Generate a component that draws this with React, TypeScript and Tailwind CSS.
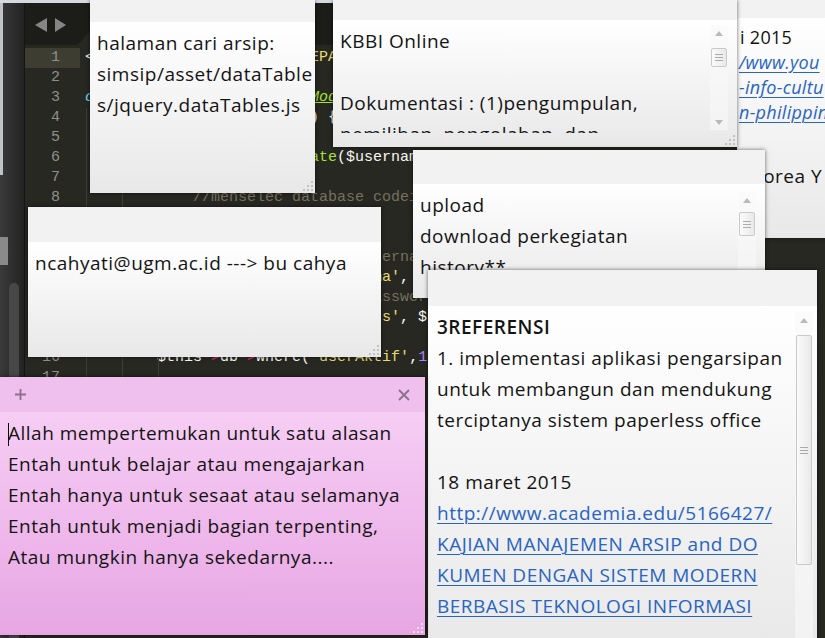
import React from 'react';

const W = 'text-[#f8f8f2]';
const C = 'text-[#75715e]';
const Y = 'text-[#e6db74]';
const P = 'text-[#f92672]';
const B = 'text-[#66d9ef] italic';
const G = 'text-[#a6e22e]';
const GI = 'text-[#a6e22e] italic underline';
const V = 'text-[#ae81ff]';

type Tok = [string, string];

const code: Tok[][] = [
  [['<?php ', W], ['if', P], [' ( ', W], ['!', P], [' ', W], ['defined', B], ['(', W], ["'BASEPATH'", Y], [')) ', W], ['exit', P], ['(', W], ["'No direct script access allowed'", Y], [');', W]],
  [],
  [['class', B], [' ', W], ['Login_m', G], [' ', W], ['extends', B], [' ', W], ['CI_Model', GI], [' {', W]],
  [['    ', W], ['function', B], [' ', W], ['__construct', G], ['() { parent::__construct(); }', W]],
  [],
  [['    ', W], ['public', B], [' ', W], ['function', B], [' ', W], ['validate', G], ['($username, $password)', W]],
  [['    {', W]],
  [['            //menselec database codeigniter', C]],
  [],
  [['            //where', C]],
  [["           //$this->db->where('username', $username);", C]],
  [['            $this', W], ['->', P], ['db', W], ['->', P], ['where(', W], ["'nama'", Y], [', $username);', W]],
  [["           //$this->db->where('password', $password);", C]],
  [['            $this', W], ['->', P], ['db', W], ['->', P], ['where(', W], ["'pass'", Y], [', $password);', W]],
  [],
  [['        $this', W], ['->', P], ['db', W], ['->', P], ['where(', W], ["'userAktif'", Y], [',', W], ['1', V], [');', W]],
  [],
  [['        $query ', W], ['=', P], [' $this', W], ['->', P], ['db', W], ['->', P], ['get(', W], ["'user'", Y], [');', W]],
  [['        ', W], ['if', P], [' ($query', W], ['->', P], ['num_rows() ', W], ['==', P], [' ', W], ['1', V], [')', W]],
  [['        {', W]],
  [['            ', W], ['return', P], [' $query', W], ['->', P], ['row();', W]],
  [['        }', W]],
  [['        ', W], ['return', P], [' ', W], ['false', V], [';', W]],
  [['    }', W]],
  [],
  [['}', W]],
  [],
];

function Grip({ pink }: { pink?: boolean }) {
  const dots = [
    [8, 0],
    [4, 4],
    [8, 4],
    [0, 8],
    [4, 8],
    [8, 8],
  ];
  return (
    <svg className="absolute right-[2px] bottom-[2px]" width="11" height="11" viewBox="0 0 11 11">
      {dots.map(([x, y], i) => (
        <rect key={i} x={x + 1} y={y + 1} width="2" height="2" fill={pink ? '#f7dcf5' : '#c2c2c2'} />
      ))}
    </svg>
  );
}

function ScrollBar({ className, thumb, down }: { className: string; thumb: string; down?: string }) {
  return (
    <div className={`absolute w-[18px] bg-[#f9f9f9]/60 ${className}`}>
      <svg className="absolute left-[5px] top-[6px]" width="8" height="5" viewBox="0 0 8 5">
        <polygon points="0,5 4,0 8,5" fill="#b9b9b9" />
      </svg>
      <div
        className={`absolute left-[1px] right-[1px] flex items-center justify-center rounded-[2px] border border-[#cacaca] bg-linear-to-r from-[#fafafa] to-[#e9e9e9] ${thumb}`}
      >
        <div className="flex flex-col gap-[2px]">
          <div className="h-px w-[8px] bg-[#ababab]" />
          <div className="h-px w-[8px] bg-[#ababab]" />
          <div className="h-px w-[8px] bg-[#ababab]" />
        </div>
      </div>
      {down && (
        <svg className={`absolute left-[5px] ${down}`} width="8" height="5" viewBox="0 0 8 5">
          <polygon points="0,0 8,0 4,5" fill="#b9b9b9" />
        </svg>
      )}
    </div>
  );
}

type NoteProps = {
  className: string;
  head: string;
  pink?: boolean;
  grip?: boolean;
  headContent?: React.ReactNode;
  extra?: React.ReactNode;
  children?: React.ReactNode;
};

function Note({ className, head, pink, grip = true, headContent, extra, children }: NoteProps) {
  return (
    <div className={`absolute flex flex-col shadow-[0_0_4px_rgba(0,0,0,0.6)] ${className}`}>
      <div className={`${head} flex shrink-0 items-center justify-between ${pink ? 'bg-[#efc0ee]' : 'bg-[#f2f2f2]'}`}>
        {headContent}
      </div>
      <div
        className={`relative min-h-0 flex-1 overflow-hidden bg-linear-to-b ${
          pink ? 'from-[#f6cdf4] to-[#e7a6e3]' : 'from-white to-[#e8e8e8]'
        }`}
      >
        {children}
        {extra}
        {grip && <Grip pink={pink} />}
      </div>
    </div>
  );
}

const hand =
  "font-['Open_Sans','Noto_Sans',sans-serif] text-[19px] tracking-[0.5px] leading-[31px] text-[#141414] whitespace-nowrap";
const link = 'text-[#2864c2] underline decoration-1 underline-offset-[3px]';

export default function App() {
  return (
    <div className="relative h-[638px] w-[825px] overflow-hidden bg-[#272822] font-['Liberation_Mono','DejaVu_Sans_Mono',monospace]">
      <div className="h-[3px] bg-[#d6dadf]" />
      <div className="flex h-[635px]">
        {/* sidebar */}
        <div className="flex w-[25px] shrink-0 border-r border-[#151515] bg-linear-to-r from-[#3a3a3a] to-[#232323]">
          <div className="flex w-[9px] flex-col">
            <div className="h-[172px] w-[3px] bg-[#bfc3c8]" />
            <div className="mt-[62px] h-[28px] w-[8px] bg-[#8a8a8a]" />
          </div>
          <div className="flex w-[10px] flex-col">
            <div className="mt-[280px] flex-1 rounded-t-full bg-[#474747]" />
          </div>
        </div>

        <div className="flex min-w-0 flex-1 flex-col">
          {/* tab bar */}
          <div className="relative flex h-[42px] shrink-0 items-center gap-[8px] bg-[#1c1c19] pl-[10px] pt-[2px]">
            <svg width="12" height="14" viewBox="0 0 12 14">
              <polygon points="12,0 0,7 12,14" fill="#858585" />
            </svg>
            <svg width="11" height="14" viewBox="0 0 11 14">
              <polygon points="0,0 11,7 0,14" fill="#858585" />
            </svg>
            <svg className="absolute bottom-0 left-[50px]" width="40" height="14" viewBox="0 0 40 14">
              <path d="M0 14 C 7 14, 9 2, 16 1 L 40 1 L 40 14 Z" fill="#272822" />
            </svg>
          </div>

          {/* editor */}
          <div className="relative pt-[3px] text-[15px] leading-[20px]">
            {code.map((toks, i) => (
              <div key={i} className="flex h-[20px] whitespace-pre">
                <div className={`w-[55px] shrink-0 pr-[20px] text-right text-[#8f908a] ${i === 0 ? 'bg-[#3e3d32]' : ''}`}>
                  {i + 1}
                </div>
                <div className="pl-[5px]">
                  {toks.map(([t, c], j) => (
                    <span key={j} className={c}>
                      {t}
                    </span>
                  ))}
                </div>
              </div>
            ))}
            <div className="pointer-events-none absolute left-[61px] top-[63px] bottom-0 w-px bg-[#3e3f38]" />
            <div className="pointer-events-none absolute left-[97px] top-[123px] bottom-0 w-px bg-[#3e3f38]" />
            <div className="pointer-events-none absolute left-[133px] top-[163px] bottom-0 w-px bg-[#3e3f38]" />
          </div>
        </div>
      </div>

      {/* note behind, top right */}
      <Note className="left-[737px] top-0 h-[238px] w-[100px]" head="h-[18px]" grip={false}>
        <div className="pl-[2px] pt-[7px] font-['Open_Sans',sans-serif] text-[18px] tracking-[0.3px] leading-[25px] whitespace-nowrap text-[#111]">
          <div className="pl-[1px]">i 2015</div>
          <div className={`italic ${link}`}>/www.you</div>
          <div className={`italic ${link}`}>-info-cultu</div>
          <div className={`italic ${link}`}>n-philippin</div>
        </div>
        <div className={`${hand} mt-[36px] pl-[14px]`}>Korea Y</div>
      </Note>

      {/* KBBI */}
      <Note
        className="left-[333px] top-0 h-[147px] w-[404px]"
        head="h-[20px]"
        extra={<ScrollBar className="left-[377px] top-[5px] h-[105px]" thumb="top-[23px] h-[19px]" down="top-[95px]" />}
      >
        <div className="h-[113px] overflow-hidden">
          <div className={`${hand} pl-[7px] pt-[6px]`}>
            <div>KBBI Online</div>
            <div>&nbsp;</div>
            <div>Dokumentasi : (1)pengumpulan,</div>
            <div>pemilihan, pengolahan, dan</div>
          </div>
        </div>
      </Note>

      {/* halaman cari arsip */}
      <Note className="left-[90px] top-0 h-[193px] w-[225px]" head="h-[22px]">
        <div className={`${hand} pl-[7px] pt-[6px]`}>
          <div>halaman cari arsip:</div>
          <div>simsip/asset/dataTable</div>
          <div>s/jquery.dataTables.js</div>
        </div>
      </Note>

      {/* upload */}
      <Note
        className="left-[413px] top-[150px] h-[148px] w-[352px]"
        head="h-[34px]"
        grip={false}
        extra={<ScrollBar className="left-[325px] top-[8px] h-[200px]" thumb="top-[20px] h-[24px]" />}
      >
        <div className={`${hand} pl-[7px] pt-[6px]`}>
          <div>upload</div>
          <div>download perkegiatan</div>
          <div>history**</div>
        </div>
      </Note>

      {/* ncahyati */}
      <Note className="left-[28px] top-[207px] h-[150px] w-[353px]" head="h-[35px]">
        <div className={`${hand} pl-[7px] pt-[6px]`}>ncahyati@ugm.ac.id ---&gt; bu cahya</div>
      </Note>

      {/* referensi */}
      <Note
        className="left-[428px] top-[270px] h-[390px] w-[389px]"
        head="h-[36px]"
        grip={false}
        extra={<ScrollBar className="left-[367px] top-[6px] h-[330px]" thumb="top-[23px] h-[230px]" />}
      >
        <div className={`${hand} pl-[9px] pt-[6px]`}>
          <div className="font-semibold">3REFERENSI</div>
          <div>1. implementasi aplikasi pengarsipan</div>
          <div>untuk membangun dan mendukung</div>
          <div>terciptanya sistem paperless office</div>
          <div>&nbsp;</div>
          <div>18 maret 2015</div>
          <div className={link}>http://www.academia.edu/5166427/</div>
          <div className={link}>KAJIAN MANAJEMEN ARSIP and DO</div>
          <div className={link}>KUMEN DENGAN SISTEM MODERN </div>
          <div className={link}>BERBASIS TEKNOLOGI INFORMASI</div>
        </div>
      </Note>

      {/* pink */}
      <Note
        className="left-0 top-[377px] h-[258px] w-[425px]"
        head="h-[35px]"
        pink
        headContent={
          <>
            <svg className="ml-[15px]" width="11" height="11" viewBox="0 0 11 11">
              <path d="M5.5 0 V11 M0 5.5 H11" stroke="#8d6f8c" strokeWidth="1.8" />
            </svg>
            <svg className="mr-[15px]" width="12" height="12" viewBox="0 0 12 12">
              <path d="M1 1 L11 11 M11 1 L1 11" stroke="#8b7189" strokeWidth="1.8" />
            </svg>
          </>
        }
      >
        <div className={`${hand} pl-[8px] pt-[6px]`}>
          <div>
            <span className="-mr-px inline-block h-[23px] w-px bg-black align-middle" />
            Allah mempertemukan untuk satu alasan
          </div>
          <div>Entah untuk belajar atau mengajarkan</div>
          <div>Entah hanya untuk sesaat atau selamanya</div>
          <div>Entah untuk menjadi bagian terpenting,</div>
          <div>Atau mungkin hanya sekedarnya....</div>
        </div>
      </Note>
    </div>
  );
}
